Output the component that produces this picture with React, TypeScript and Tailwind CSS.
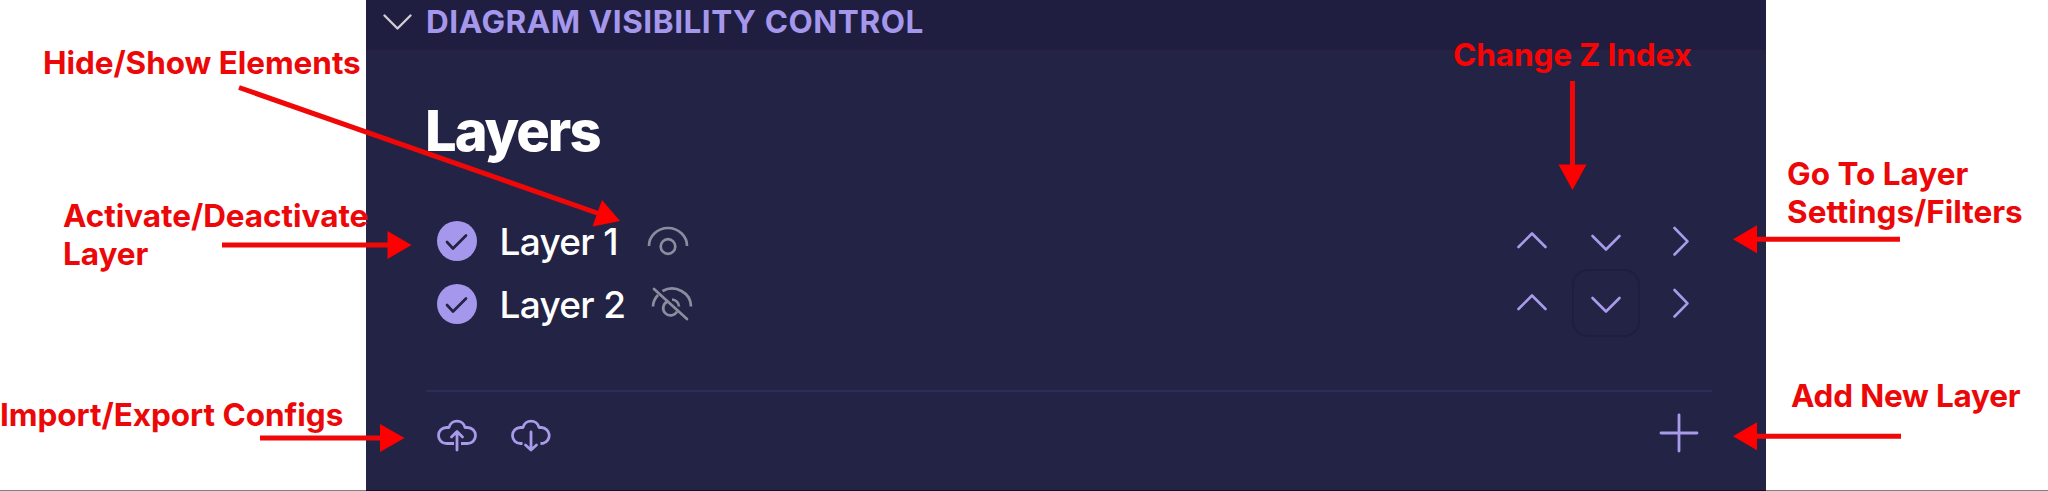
import React from "react";

type IconProps = { className?: string };

function Chevron({ dir }: { dir: "up" | "down" | "right" }) {
  const d = {
    up: "M19.500 40 L33 26.500 L46.500 40",
    down: "M20.500 29 L34 42.500 L47.500 29",
    right: "M27.500 21 L40.500 34.300 L27.500 47.500",
  }[dir];
  return (
    <svg width="68" height="68" viewBox="0 0 68 68" fill="none" stroke="#a79bea" strokeWidth="2.600" strokeLinecap="round" strokeLinejoin="round">
      <path d={d} />
    </svg>
  );
}

function Check() {
  return (
    <svg width="40" height="40" viewBox="0 0 40 40" fill="none">
      <circle cx="20" cy="20" r="20" fill="#a597ec" />
      <path d="M10 21 L16 27.500 L29 14.500" stroke="#232345" strokeWidth="2.700" strokeLinecap="round" strokeLinejoin="round" />
    </svg>
  );
}

function Eye({ className }: IconProps) {
  return (
    <svg className={className} width="44" height="36" viewBox="0 0 44 36" fill="none" stroke="#8c8c9f" strokeWidth="2.700">
      <path d="M3 23 A19 18 0 0 1 41 23" />
      <circle cx="22" cy="23.500" r="7.300" />
    </svg>
  );
}

function EyeOff({ className }: IconProps) {
  return (
    <svg className={className} width="44" height="36" viewBox="0 0 44 36" fill="none" stroke="#8c8c9f" strokeWidth="2.700">
      <path d="M3 21.500 A19 18 0 0 1 8 10" />
      <path d="M12.500 6 A19 18 0 0 1 41 21.500" />
      <path d="M17.500 16.500 A7.300 7.300 0 1 0 27 26.500" />
      <path d="M22 14.500 A7.300 7.300 0 0 1 29 21.500" />
      <path d="M4 4 L37 34" strokeLinecap="round" />
    </svg>
  );
}

function Cloud({ dir }: { dir: "up" | "down" }) {
  const up = dir === "up";
  return (
    <svg width="44" height="40" viewBox="0 0 44 40" fill="none" stroke="#a79bea" strokeWidth="2.800" strokeLinejoin="round">
      <path
        d={
          up
            ? "M19 25.500 H11.500 A8 8 0 0 1 11.500 9.500 H14 A8.200 8.200 0 0 1 30 9.500 H32.500 A8 8 0 0 1 32.500 25.500 H26"
            : "M13.500 25.500 H11.500 A8 8 0 0 1 11.500 9.500 H14 A8.200 8.200 0 0 1 30 9.500 H32.500 A8 8 0 0 1 34 25.300 L31.500 25.500"
        }
      />
      <path strokeLinecap="round" d={up ? "M22 32 V14 M16.500 19 L22 13.500 L27.500 19" : "M22 14 V32 M16.500 27 L22 32 L27.500 27"} />
    </svg>
  );
}

function LayerRow({ name, visible, focused }: { name: string; visible: boolean; focused?: boolean }) {
  return (
    <div className="flex h-[62.500px] items-center">
      <div className="mt-[0.500px] ml-[10.500px]">
        <Check />
      </div>
      <span className="mt-[2px] ml-[23px] text-[37px] leading-none font-medium tracking-[-0.7px] whitespace-nowrap text-white">{name}</span>
      {visible ? <Eye className="ml-[28px]" /> : <EyeOff className="ml-[25px]" />}
      <div className="mr-[-3.500px] ml-auto flex items-center">
        <button>
          <Chevron dir="up" />
        </button>
        <button className={focused ? "ml-[5.500px] rounded-[16px] outline-2 outline-offset-[-2px] outline-[#1f1e3d]" : "ml-[5.500px]"}>
          <Chevron dir="down" />
        </button>
        <button className="ml-[7px]">
          <Chevron dir="right" />
        </button>
      </div>
    </div>
  );
}

const labelBase = "absolute whitespace-pre text-[31.5px] leading-[38px] font-bold";

export default function App() {
  return (
    <div className="relative h-[491px] w-[2048px] overflow-hidden bg-white font-['Inter',sans-serif]">
      <section className="ml-[365.500px] h-[491px] w-[1400px] bg-[#232345]">
        <header className="flex h-[52px] items-center border-b-2 border-[#282143] bg-[#1f1e40]">
          <svg className="mt-[-6px] ml-[15px]" width="32" height="20" viewBox="0 0 32 20" fill="none" stroke="#cfcdd2" strokeWidth="2.400" strokeLinecap="round">
            <path d="M3.500 3.500 L16.500 16.500 L29.500 3.500" strokeLinejoin="round" />
          </svg>
          <h2 className="mt-[-7px] ml-[13.500px] text-[31.5px] leading-none font-bold tracking-[0.54px] whitespace-nowrap text-[#a597ec]">DIAGRAM VISIBILITY CONTROL</h2>
        </header>
        <div className="mr-[54px] ml-[60.500px]">
          <h1 className="ml-[-1px] pt-[45px] text-[56px] leading-[68px] font-extrabold tracking-[-2px] text-white">Layers</h1>
          <div className="mt-[44.500px]">
            <LayerRow name="Layer 1" visible />
            <LayerRow name="Layer 2" visible={false} focused />
          </div>
          <div className="mt-[55px] flex items-center border-t-2 border-[#2c2c5a] pt-[26px]">
            <div className="ml-[8.500px]">
              <Cloud dir="up" />
            </div>
            <div className="ml-[30px]">
              <Cloud dir="down" />
            </div>
            <svg className="mt-[-9px] mr-[13px] ml-auto" width="40" height="40" viewBox="0 0 40 40" stroke="#a79bea" strokeWidth="2.800" strokeLinecap="round">
              <path d="M20 2 V38 M2 20 H38" />
            </svg>
          </div>
        </div>
      </section>

      <p className={`${labelBase} top-[44px] left-[43px] tracking-[-0.06px] text-[#ec0808]`}>Hide/Show Elements</p>
      <p className={`${labelBase} top-[197px] left-[63px] tracking-[-0.04px] text-[#ec0808]`}>{"Activate/Deactivate\nLayer"}</p>
      <p className={`${labelBase} top-[396px] left-[0px] tracking-[-0.04px] text-[#ec0808]`}>Import/Export Configs</p>
      <p className={`${labelBase} top-[36px] left-[1453px] tracking-[-0.1px] text-[#f80404]`}>Change Z Index</p>
      <p className={`${labelBase} top-[155px] left-[1787px] text-[#ec0808]`}>{"Go To Layer\nSettings/Filters"}</p>
      <p className={`${labelBase} top-[376.500px] left-[1791px] tracking-[-0.2px] text-[#ec0808]`}>Add New Layer</p>

      <svg className="absolute inset-0" width="2048" height="491" viewBox="0 0 2048 491" fill="#ff0000">
        <g stroke="#f00808" strokeWidth="5">
          <path d="M239 87.500 L600 214" />
          <path d="M222 245 H390" />
          <path d="M260 438 H382" />
          <path d="M1572.500 81 V166" />
          <path d="M1900 239.300 H1755" />
          <path d="M1901 436.300 H1755" />
        </g>
        <path d="M620 221 L602 200 L592.500 226.500 Z" />
        <path d="M411.500 245 L387.500 231 V259 Z" />
        <path d="M404.500 438 L380 424 V452 Z" />
        <path d="M1572.500 190 L1558.500 164.500 H1586.500 Z" />
        <path d="M1733 239.300 L1757 225.300 V253.300 Z" />
        <path d="M1733 436.300 L1757 422.300 V450.300 Z" />
      </svg>
      <div className="absolute bottom-0 left-0 h-px w-full bg-black/50" />
    </div>
  );
}
